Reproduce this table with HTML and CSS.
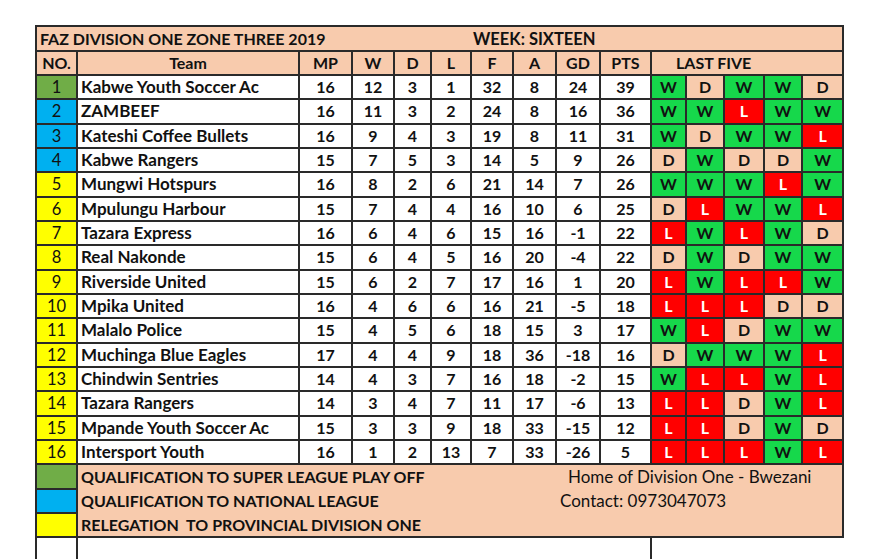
FILE: index.html
```html
<!DOCTYPE html>
<html>
<head>
<meta charset="utf-8">
<link rel="stylesheet" href="styles.css">
</head>
<body>
<div class="page">
<table class="league">
<colgroup>
<col class="c-no"><col class="c-team"><col class="c-mp"><col class="c-w"><col class="c-d"><col class="c-l"><col class="c-f"><col class="c-a"><col class="c-gd"><col class="c-pts"><col class="c-f1"><col class="c-f2"><col class="c-f3"><col class="c-f4"><col class="c-f5">
</colgroup>
<tr class="title-row"><td colspan="15" class="title"><span class="t-left">FAZ DIVISION ONE ZONE THREE 2019</span><span class="t-week">WEEK: SIXTEEN</span></td></tr>
<tr class="head-row"><th>NO.</th><th>Team</th><th>MP</th><th>W</th><th>D</th><th>L</th><th>F</th><th>A</th><th>GD</th><th>PTS</th><th colspan="5" class="lastfive">LAST FIVE</th></tr>
<tr><td class="no green">1</td><td class="team">Kabwe Youth Soccer Ac</td><td>16</td><td>12</td><td>3</td><td>1</td><td>32</td><td>8</td><td>24</td><td>39</td><td class="w">W</td><td class="d">D</td><td class="w">W</td><td class="w">W</td><td class="d">D</td></tr>
<tr><td class="no blue">2</td><td class="team">ZAMBEEF</td><td>16</td><td>11</td><td>3</td><td>2</td><td>24</td><td>8</td><td>16</td><td>36</td><td class="w">W</td><td class="w">W</td><td class="l">L</td><td class="w">W</td><td class="w">W</td></tr>
<tr><td class="no blue">3</td><td class="team">Kateshi Coffee Bullets</td><td>16</td><td>9</td><td>4</td><td>3</td><td>19</td><td>8</td><td>11</td><td>31</td><td class="w">W</td><td class="d">D</td><td class="w">W</td><td class="w">W</td><td class="l">L</td></tr>
<tr><td class="no blue">4</td><td class="team">Kabwe Rangers</td><td>15</td><td>7</td><td>5</td><td>3</td><td>14</td><td>5</td><td>9</td><td>26</td><td class="d">D</td><td class="w">W</td><td class="d">D</td><td class="d">D</td><td class="w">W</td></tr>
<tr><td class="no yellow">5</td><td class="team">Mungwi Hotspurs</td><td>16</td><td>8</td><td>2</td><td>6</td><td>21</td><td>14</td><td>7</td><td>26</td><td class="w">W</td><td class="w">W</td><td class="w">W</td><td class="l">L</td><td class="w">W</td></tr>
<tr><td class="no yellow">6</td><td class="team">Mpulungu Harbour</td><td>15</td><td>7</td><td>4</td><td>4</td><td>16</td><td>10</td><td>6</td><td>25</td><td class="d">D</td><td class="l">L</td><td class="w">W</td><td class="w">W</td><td class="l">L</td></tr>
<tr><td class="no yellow">7</td><td class="team">Tazara Express</td><td>16</td><td>6</td><td>4</td><td>6</td><td>15</td><td>16</td><td>-1</td><td>22</td><td class="l">L</td><td class="w">W</td><td class="l">L</td><td class="w">W</td><td class="d">D</td></tr>
<tr><td class="no yellow">8</td><td class="team">Real Nakonde</td><td>15</td><td>6</td><td>4</td><td>5</td><td>16</td><td>20</td><td>-4</td><td>22</td><td class="d">D</td><td class="w">W</td><td class="d">D</td><td class="w">W</td><td class="w">W</td></tr>
<tr><td class="no yellow">9</td><td class="team">Riverside United</td><td>15</td><td>6</td><td>2</td><td>7</td><td>17</td><td>16</td><td>1</td><td>20</td><td class="l">L</td><td class="w">W</td><td class="l">L</td><td class="l">L</td><td class="w">W</td></tr>
<tr><td class="no yellow">10</td><td class="team">Mpika United</td><td>16</td><td>4</td><td>6</td><td>6</td><td>16</td><td>21</td><td>-5</td><td>18</td><td class="l">L</td><td class="l">L</td><td class="l">L</td><td class="d">D</td><td class="d">D</td></tr>
<tr><td class="no yellow">11</td><td class="team">Malalo Police</td><td>15</td><td>4</td><td>5</td><td>6</td><td>18</td><td>15</td><td>3</td><td>17</td><td class="w">W</td><td class="l">L</td><td class="d">D</td><td class="w">W</td><td class="w">W</td></tr>
<tr><td class="no yellow">12</td><td class="team">Muchinga Blue Eagles</td><td>17</td><td>4</td><td>4</td><td>9</td><td>18</td><td>36</td><td>-18</td><td>16</td><td class="d">D</td><td class="w">W</td><td class="w">W</td><td class="w">W</td><td class="l">L</td></tr>
<tr><td class="no yellow">13</td><td class="team">Chindwin Sentries</td><td>14</td><td>4</td><td>3</td><td>7</td><td>16</td><td>18</td><td>-2</td><td>15</td><td class="w">W</td><td class="l">L</td><td class="l">L</td><td class="w">W</td><td class="l">L</td></tr>
<tr><td class="no yellow">14</td><td class="team">Tazara Rangers</td><td>14</td><td>3</td><td>4</td><td>7</td><td>11</td><td>17</td><td>-6</td><td>13</td><td class="l">L</td><td class="l">L</td><td class="d">D</td><td class="w">W</td><td class="l">L</td></tr>
<tr><td class="no yellow">15</td><td class="team">Mpande Youth Soccer Ac</td><td>15</td><td>3</td><td>3</td><td>9</td><td>18</td><td>33</td><td>-15</td><td>12</td><td class="l">L</td><td class="l">L</td><td class="d">D</td><td class="w">W</td><td class="d">D</td></tr>
<tr><td class="no yellow">16</td><td class="team">Intersport Youth</td><td>16</td><td>1</td><td>2</td><td>13</td><td>7</td><td>33</td><td>-26</td><td>5</td><td class="l">L</td><td class="l">L</td><td class="l">L</td><td class="w">W</td><td class="l">L</td></tr>
<tr class="legend-row"><td class="no green"></td><td colspan="14" class="legend legend-top"><span class="leg-left">QUALIFICATION TO SUPER LEAGUE PLAY OFF</span><span class="leg-right home">Home of Division One - Bwezani</span></td></tr>
<tr class="legend-row"><td class="no blue"></td><td colspan="14" class="legend legend-mid"><span class="leg-left">QUALIFICATION TO NATIONAL LEAGUE</span><span class="leg-right">Contact: 0973047073</span></td></tr>
<tr class="legend-row"><td class="no yellow"></td><td colspan="14" class="legend legend-bot"><span class="leg-left">RELEGATION&nbsp; TO PROVINCIAL DIVISION ONE</span></td></tr>
<tr class="blank-row"><td class="blank-no"></td><td colspan="9" class="blank-mid"></td><td colspan="5" class="blank-end"></td></tr>
</table>
</div>
</body>
</html>
```
FILE: styles.css
```css
html, body {
  margin: 0;
  padding: 0;
  background: #ffffff;
}
.page {
  padding: 25px 0 0 35px;
}
.league {
  border-collapse: collapse;
  table-layout: fixed;
  width: 809px;
  font-family: Lato, "Open Sans", sans-serif;
  font-weight: 700;
  font-size: 16px;
  color: #111;
}
.c-no { width: 41px; }
.c-team { width: 222px; }
.c-mp { width: 53px; }
.c-w { width: 42px; }
.c-d { width: 37px; }
.c-l { width: 40px; }
.c-f { width: 42px; }
.c-a { width: 43px; }
.c-gd { width: 44px; }
.c-pts { width: 51px; }
.c-f1 { width: 35px; }
.c-f2 { width: 38px; }
.c-f3 { width: 40px; }
.c-f4 { width: 38px; }
.c-f5 { width: 41px; }

.league td, .league th {
  border: 2px solid #2a2a2a;
  padding: 0;
  text-align: center;
  height: 22px;
  line-height: 20px;
  white-space: nowrap;
  overflow: hidden;
}
.league tr { height: 24.33px; }
.league .title-row { height: 25px; }
.league .head-row { height: 24px; }
.title {
  background: #f8cbad;
  text-align: left !important;
}
.t-left {
  display: inline-block;
  padding-left: 3px;
  width: 433px;
}
.t-week {
  display: inline-block;
  font-size: 16.5px;
}
.head-row th {
  background: #f8cbad;
  font-weight: 700;
}
.head-row .lastfive {
  text-align: left;
  padding-left: 24px;
}
.league td.team {
  text-align: left;
  padding-left: 3px;
  font-size: 17px;
}
.league td.no {
  font-weight: 400;
  font-size: 16.5px;
}
.green { background: #70ad47; }
.blue { background: #00b0f0; }
.yellow { background: #ffff00; }
.w { background: #16d84b; }
.d { background: #f8cbad; }
.l { background: #ff0000; color: #ffffff; }

.league td.legend {
  background: #f8cbad;
  text-align: left;
  padding-left: 3px;
}
.league td.legend-top { border-bottom: none; }
.league td.legend-mid { border-top: none; border-bottom: none; }
.league td.legend-bot { border-top: none; }
.leg-left {
  display: inline-block;
  width: 479px;
}
.leg-right {
  display: inline-block;
  font-weight: 400;
  font-size: 17px;
}
.leg-right.home {
  padding-left: 8px;
}
.blank-row { height: 30px; }
.league td.blank-no {
  border-bottom: none;
}
.league td.blank-mid {
  border-left: 2px solid #2a2a2a;
  border-right: 2px solid #2a2a2a;
  border-bottom: none;
}
.league td.blank-end {
  border: none;
  border-top: 2px solid #2a2a2a;
}
```
